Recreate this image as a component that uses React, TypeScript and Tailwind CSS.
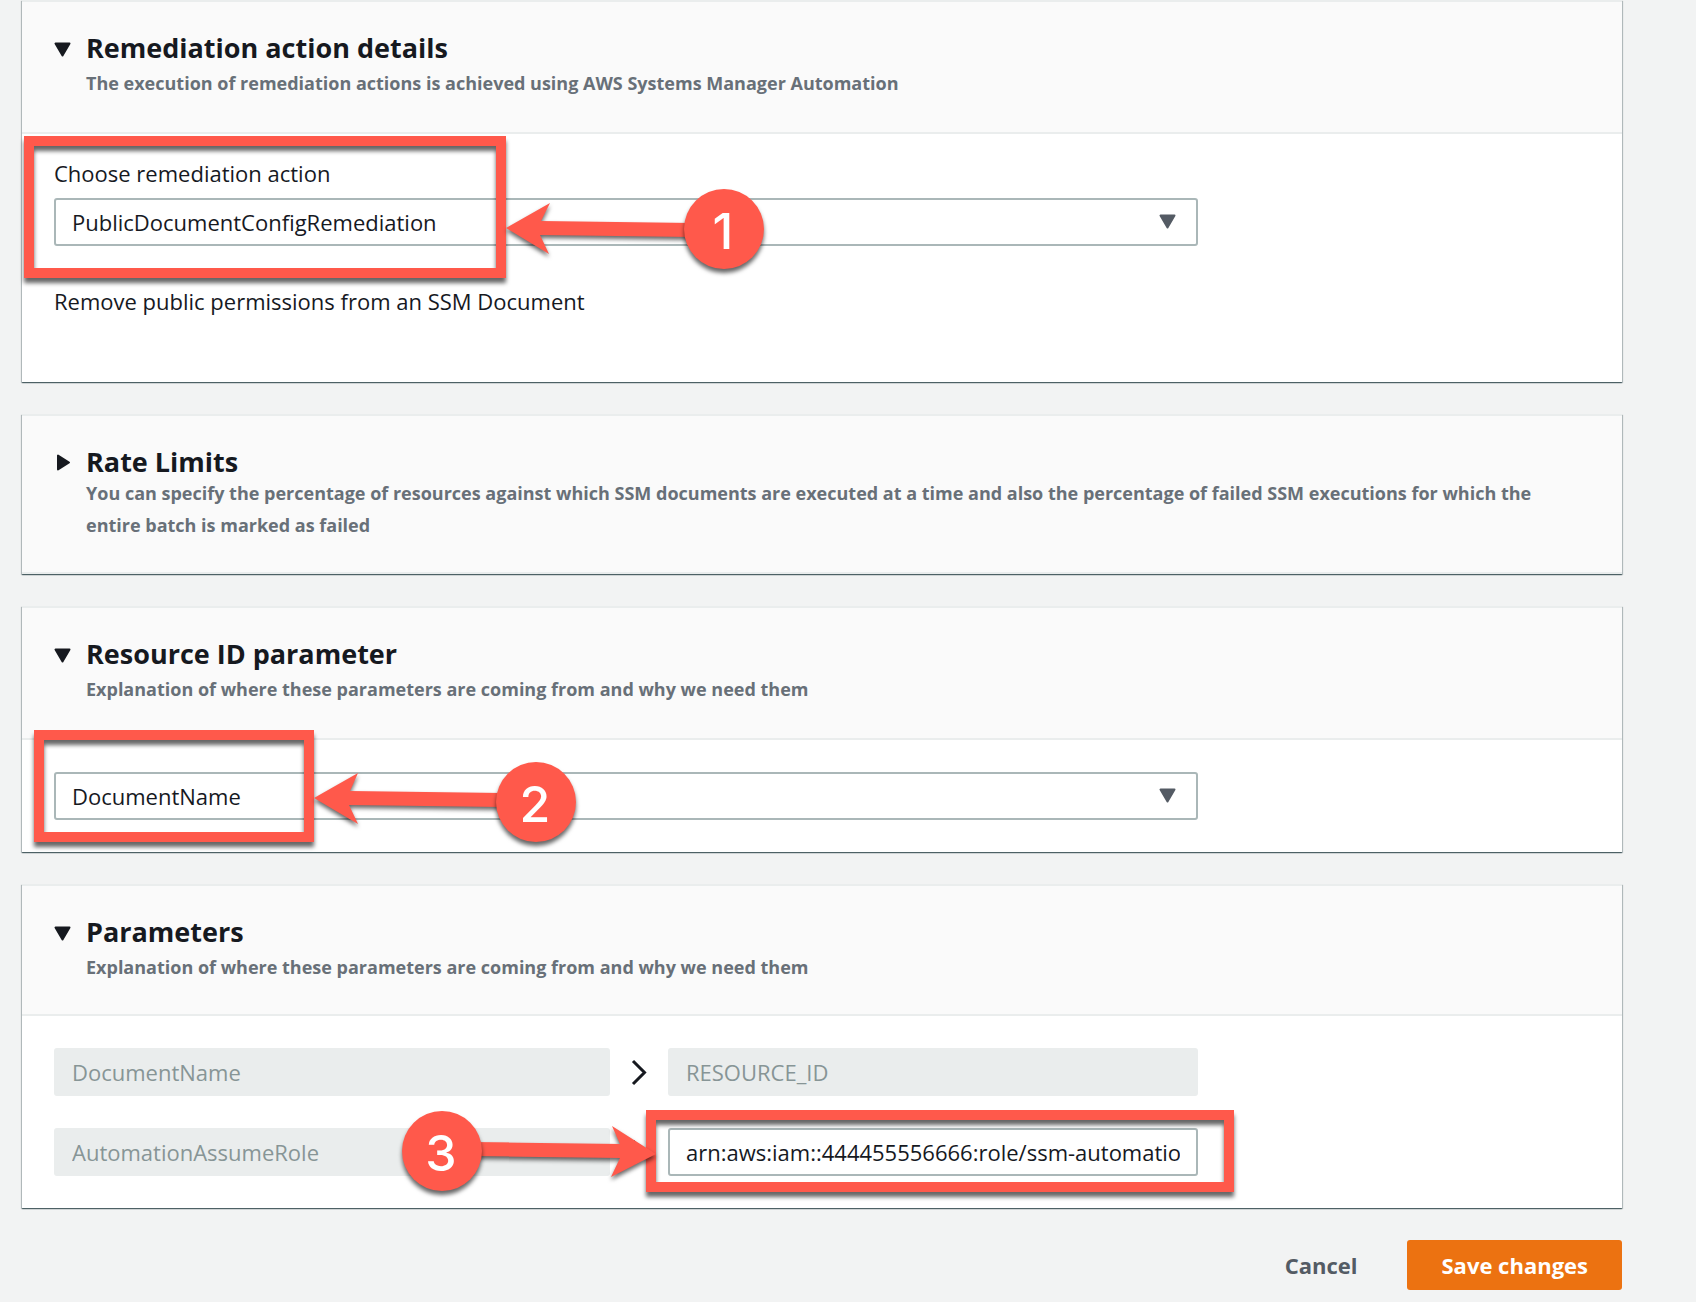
import { useState, type ReactNode } from 'react'

type Point = [number, number]

function Caret({ className, d = 'M1.5 1.5h14L8.5 13.5z' }: { className?: string; d?: string }) {
  return (
    <svg width="17" height="17" viewBox="0 0 17 17" className={className} aria-hidden="true">
      <path d={d} fill="currentColor" stroke="currentColor" strokeWidth="2" strokeLinejoin="round" />
    </svg>
  )
}

function Chevron() {
  return (
    <svg width="18" height="28" viewBox="0 0 18 28" className="mx-auto text-[#16191f]" aria-hidden="true">
      <path d="M3 3l11.5 11.5L3 26" fill="none" stroke="currentColor" strokeWidth="3" />
    </svg>
  )
}

// Numbered marker with an arrow and a highlight frame, in the panel's own coordinates
function Callout({
  frame,
  arrow,
  badge,
  step,
}: {
  frame: { x: number; y: number; width: number; height: number }
  arrow: Point[]
  badge: Point
  step: number
}) {
  return (
    <svg className="absolute inset-0 size-full overflow-visible pointer-events-none fill-[#ff594b]">
      <g className="drop-shadow-[0_5px_2px_rgba(0,0,0,0.6)]">
        <rect {...frame} className="fill-none stroke-[#ff594b]" strokeWidth="10" />
      </g>
      <polygon points={arrow.join(' ')} className="drop-shadow-[0_3px_2px_rgba(0,0,0,0.6)]" />
      <circle cx={badge[0]} cy={badge[1]} r="40" className="drop-shadow-[0_4px_2px_rgba(0,0,0,0.6)]" />
      <text
        x={badge[0] - 1}
        y={badge[1] + 20}
        textAnchor="middle"
        className="fill-white font-['Inter',sans-serif] text-[50px] font-medium"
      >
        {step}
      </text>
    </svg>
  )
}

function Panel({
  title,
  description,
  defaultOpen = true,
  headerClass,
  children,
}: {
  title: string
  description: string
  defaultOpen?: boolean
  headerClass: string
  children?: ReactNode
}) {
  const [open, setOpen] = useState(defaultOpen)
  return (
    <section className="relative bg-white border-t-2 border-[#eaeded] shadow-[0_1px_1px_0_rgba(0,28,36,0.5),1px_1px_1px_0_rgba(0,28,36,0.2),-1px_1px_1px_0_rgba(0,28,36,0.2)]">
      <header className={`bg-[#fafafa] border-b-2 border-[#eaeded] px-8 pt-[31px] ${headerClass}`}>
        <h2>
          <button
            type="button"
            aria-expanded={open}
            onClick={() => setOpen(!open)}
            className="flex items-center gap-[15px] text-[27px] leading-[30px] font-bold text-[#16191f]"
          >
            {open ? <Caret className="mt-1" /> : <Caret d="M4 1.5v14L15 8.5z" />}
            {title}
          </button>
        </h2>
        <p className={`pl-8 text-lg leading-8 font-bold text-[#687078] ${defaultOpen ? 'mt-1' : ''}`}>{description}</p>
      </header>
      {open && children}
    </section>
  )
}

function Dropdown({ id, label, value }: { id: string; label?: string; value: string }) {
  return (
    <div className="relative max-w-[1144px]">
      <select
        id={id}
        aria-label={label}
        className="block w-full h-12 px-4 appearance-none bg-white border-2 border-[#aab7b8] rounded-[3px]"
      >
        <option>{value}</option>
      </select>
      <Caret className="absolute right-[22px] top-4 text-[#545b64] pointer-events-none" />
    </div>
  )
}

const field = 'block w-full min-w-0 h-12 px-4 border-2 rounded-[3px]'
const disabledField = `${field} bg-[#eaeded] border-[#eaeded] text-[#879596]`

export default function App() {
  return (
    <div className="min-h-screen bg-[#f2f3f3] pl-[22px] pr-[74px] pb-3 font-['Open_Sans','Noto_Sans',sans-serif] text-[22px] leading-7 text-[#16191f]">
      <form className="flex flex-col gap-8" onSubmit={(e) => e.preventDefault()}>
        <Panel
          title="Remediation action details"
          description="The execution of remediation actions is achieved using AWS Systems Manager Automation"
          headerClass="pb-[33px]"
        >
          <div className="px-8 pt-[25px] pb-[67px]">
            <label htmlFor="action" className="block mb-[11px]">
              Choose remediation action
            </label>
            <Dropdown id="action" value="PublicDocumentConfigRemediation" />
            <p className="mt-[41px]">Remove public permissions from an SSM Document</p>
          </div>
          <Callout
            step={1}
            frame={{ x: 7, y: 139, width: 472, height: 132 }}
            arrow={[[484, 226], [528, 201], [519, 219], [670, 221], [670, 235], [518, 233], [527, 252]]}
            badge={[702, 227]}
          />
        </Panel>

        {/* Collapsed by default */}
        <Panel
          title="Rate Limits"
          description="You can specify the percentage of resources against which SSM documents are executed at a time and also the percentage of failed SSM executions for which the entire batch is marked as failed"
          defaultOpen={false}
          headerClass="pb-[31px]"
        />

        <Panel
          title="Resource ID parameter"
          description="Explanation of where these parameters are coming from and why we need them"
          headerClass="pb-[33px]"
        >
          <div className="p-8">
            <Dropdown id="resource" label="Resource ID parameter" value="DocumentName" />
          </div>
          <Callout
            step={2}
            frame={{ x: 17, y: 127, width: 270, height: 102 }}
            arrow={[[292, 190], [336, 165], [328, 183], [480, 185], [480, 199], [327, 197], [336, 216]]}
            badge={[514, 194]}
          />
        </Panel>

        <Panel
          title="Parameters"
          description="Explanation of where these parameters are coming from and why we need them"
          headerClass="pb-[31px]"
        >
          <div className="p-8">
            <div className="grid grid-cols-[556fr_58px_530fr] items-center gap-y-8 max-w-[1144px]">
              <input aria-label="Parameter 1" className={disabledField} value="DocumentName" disabled />
              <Chevron />
              <input aria-label="Value 1" className={disabledField} value="RESOURCE_ID" disabled />
              <input aria-label="Parameter 2" className={disabledField} value="AutomationAssumeRole" disabled />
              <Chevron />
              <input
                aria-label="Value 2"
                className={`${field} bg-white border-[#aab7b8]`}
                defaultValue="arn:aws:iam::444455556666:role/ssm-automatio"
              />
            </div>
          </div>
          <Callout
            step={3}
            frame={{ x: 629, y: 229, width: 578, height: 72 }}
            arrow={[[634, 268], [590, 240], [598, 258], [450, 256], [450, 270], [598, 272], [589, 291]]}
            badge={[420, 265]}
          />
        </Panel>

        <div className="flex justify-end gap-4 font-bold">
          <button type="button" className="h-[50px] px-[34px] text-[#545b64]">
            Cancel
          </button>
          <button type="submit" className="h-[50px] px-[34px] rounded-[3px] bg-[#ec7211] text-white">
            Save changes
          </button>
        </div>
      </form>
    </div>
  )
}
